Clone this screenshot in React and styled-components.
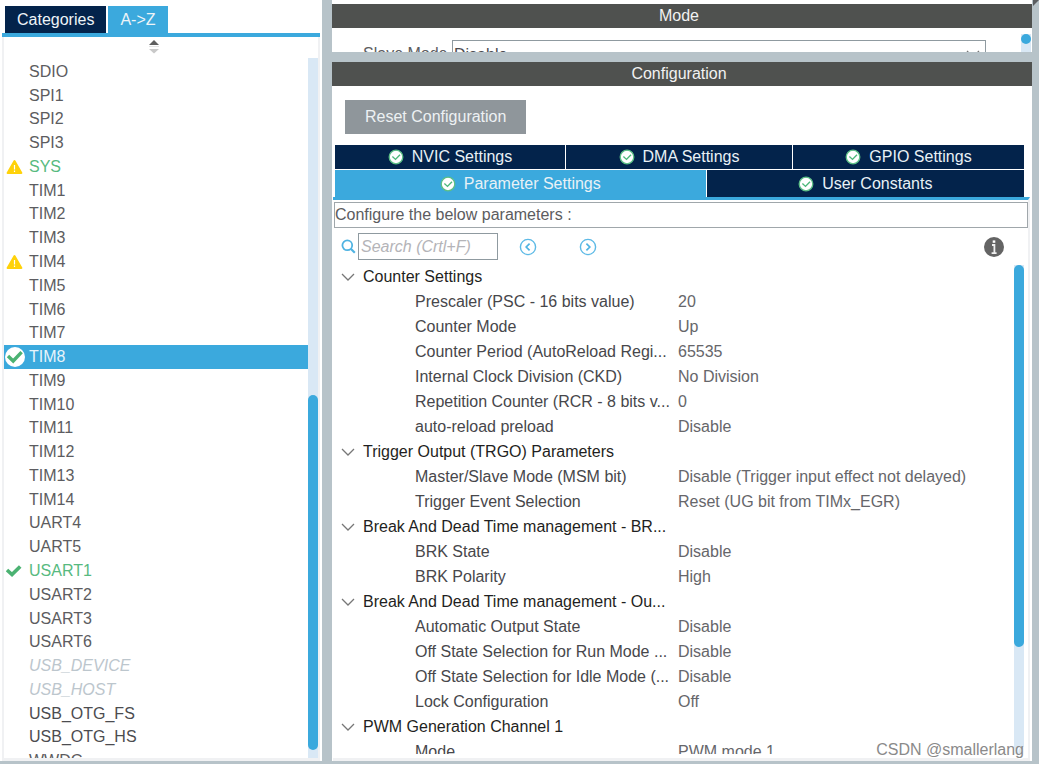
import React, { useState } from 'react'
import styled, { createGlobalStyle, css } from 'styled-components'

const peripherals = [
  { name: 'SDIO' },
  { name: 'SPI1' },
  { name: 'SPI2' },
  { name: 'SPI3' },
  { name: 'SYS', status: 'warning', used: true },
  { name: 'TIM1' },
  { name: 'TIM2' },
  { name: 'TIM3' },
  { name: 'TIM4', status: 'warning' },
  { name: 'TIM5' },
  { name: 'TIM6' },
  { name: 'TIM7' },
  { name: 'TIM8', status: 'selected' },
  { name: 'TIM9' },
  { name: 'TIM10' },
  { name: 'TIM11' },
  { name: 'TIM12' },
  { name: 'TIM13' },
  { name: 'TIM14' },
  { name: 'UART4' },
  { name: 'UART5' },
  { name: 'USART1', status: 'ok', used: true },
  { name: 'USART2' },
  { name: 'USART3' },
  { name: 'USART6' },
  { name: 'USB_DEVICE', disabled: true },
  { name: 'USB_HOST', disabled: true },
  { name: 'USB_OTG_FS', dark: true },
  { name: 'USB_OTG_HS', dark: true },
  { name: 'WWDG' },
]

const groups = [
  {
    title: 'Counter Settings',
    params: [
      ['Prescaler (PSC - 16 bits value)', '20'],
      ['Counter Mode', 'Up'],
      ['Counter Period (AutoReload Regi...', '65535'],
      ['Internal Clock Division (CKD)', 'No Division'],
      ['Repetition Counter (RCR - 8 bits v...', '0'],
      ['auto-reload preload', 'Disable'],
    ],
  },
  {
    title: 'Trigger Output (TRGO) Parameters',
    params: [
      ['Master/Slave Mode (MSM bit)', 'Disable (Trigger input effect not delayed)'],
      ['Trigger Event Selection', 'Reset (UG bit from TIMx_EGR)'],
    ],
  },
  {
    title: 'Break And Dead Time management - BR...',
    params: [
      ['BRK State', 'Disable'],
      ['BRK Polarity', 'High'],
    ],
  },
  {
    title: 'Break And Dead Time management - Ou...',
    params: [
      ['Automatic Output State', 'Disable'],
      ['Off State Selection for Run Mode ...', 'Disable'],
      ['Off State Selection for Idle Mode (...', 'Disable'],
      ['Lock Configuration', 'Off'],
    ],
  },
  {
    title: 'PWM Generation Channel 1',
    params: [['Mode', 'PWM mode 1']],
  },
]

const WarningIcon = () => (
  <svg width="18" height="16" viewBox="0 0 18 16">
    <path d="M8.5 2 L15.4 14 H1.6 Z" fill="#ffd20a" stroke="#ffd20a" strokeWidth="2" strokeLinejoin="round" />
    <path d="M8.5 6v4.4M8.5 11.6v1.4" stroke="#fff" strokeWidth="1.2" />
  </svg>
)

const OkIcon = () => (
  <svg width="18" height="16" viewBox="0 0 18 16">
    <path d="M1 7 L6 11.6 L14.2 3.4" fill="none" stroke="#4bb272" strokeWidth="3.6" />
  </svg>
)

const SelectedIcon = () => (
  <svg width="20" height="20" viewBox="0 0 20 20">
    <circle cx="10" cy="10" r="10" fill="#fff" />
    <path d="M3 9 L8.2 14 L16.6 5.2" fill="none" stroke="#4bb272" strokeWidth="3.4" />
  </svg>
)

const TabCheck = () => (
  <svg width="16" height="16" viewBox="0 0 16 16">
    <circle cx="8" cy="8" r="6.8" fill="#fff" stroke="#5cbf86" strokeWidth="1.3" />
    <path d="M4.4 7.6 L7.5 10.4 L12 5.8" fill="none" stroke="#4cb87a" strokeWidth="1.4" />
  </svg>
)

const Chevron = () => (
  <svg width="14" height="8" viewBox="0 0 14 8">
    <path d="M1 1 L7 7 L13 1" fill="none" stroke="#777" strokeWidth="1.3" />
  </svg>
)

const SortIcon = () => (
  <svg width="12" height="14" viewBox="0 0 12 14">
    <path d="M6 0 L11 5 H1 Z" fill="#5f5f5f" />
    <path d="M1 9 H11 L6 13.5 Z" fill="#c9c9c9" />
    <path d="M1 6.5 H11" stroke="#e4e4e4" />
  </svg>
)

const SearchIcon = () => (
  <svg width="15" height="15" viewBox="0 0 15 15">
    <circle cx="6.3" cy="6.3" r="4.9" fill="none" stroke="#4fb3e2" strokeWidth="1.8" />
    <path d="M9.8 9.8 L13.8 13.8" stroke="#4fb3e2" strokeWidth="2.2" />
  </svg>
)

const CircleArrow = ({ d }) => (
  <svg width="18" height="18" viewBox="0 0 18 18">
    <circle cx="9" cy="9" r="7.6" fill="none" stroke="#5dbae6" strokeWidth="1.4" />
    <path d={d} fill="none" stroke="#4fb3e2" strokeWidth="1.7" />
  </svg>
)

const InfoIcon = () => (
  <svg width="20" height="20" viewBox="0 0 20 20">
    <circle cx="10" cy="10" r="10" fill="#646464" />
    <path d="M10 3.4v2.4" stroke="#fff" strokeWidth="2.6" />
    <path d="M8 8h2.4v8M7.6 16.2h5" fill="none" stroke="#f0f0f0" strokeWidth="1.8" />
  </svg>
)

function Sidebar() {
  const [selected, setSelected] = useState('TIM8')

  return (
    <SidePanel>
      <SideTabs>
        <SideTab type="button">Categories</SideTab>
        <SideTab type="button" $active>A-&gt;Z</SideTab>
      </SideTabs>
      <SideBody>
        <SortButton type="button" aria-label="Sort"><SortIcon /></SortButton>
        <ListArea>
          <List>
            {peripherals.map((item) => (
              <Item key={item.name} $active={item.name === selected}>
                <Status>
                  {item.status === 'warning' && <WarningIcon />}
                  {item.status === 'ok' && <OkIcon />}
                  {item.status === 'selected' && <SelectedIcon />}
                </Status>
                <ItemButton
                  type="button"
                  disabled={item.disabled}
                  $used={item.used}
                  $dark={item.dark}
                  $active={item.name === selected}
                  onClick={() => setSelected(item.name)}
                >
                  {item.name}
                </ItemButton>
              </Item>
            ))}
          </List>
          <Track $before={337} $thumb={355} $after={8} />
        </ListArea>
      </SideBody>
    </SidePanel>
  )
}

function ModePanel() {
  return (
    <ModeBox>
      <Title>Mode</Title>
      <ModeBody>
        <ModeLabel htmlFor="slave-mode">Slave Mode</ModeLabel>
        <SelectWrap>
          <ModeSelect id="slave-mode" defaultValue="Disable">
            <option>Disable</option>
          </ModeSelect>
          <Chevron />
        </SelectWrap>
        <Track $before={0} $thumb={10} $after={8} />
      </ModeBody>
    </ModeBox>
  )
}

function ConfigPanel() {
  return (
    <ConfigBox>
      <Title>Configuration</Title>
      <ResetButton type="button">Reset Configuration</ResetButton>
      <TabRow>
        <Tab type="button" $grow={230}><TabCheck />NVIC Settings</Tab>
        <Tab type="button" $grow={226}><TabCheck />DMA Settings</Tab>
        <Tab type="button" $grow={231}><TabCheck />GPIO Settings</Tab>
      </TabRow>
      <TabRow $tall>
        <Tab type="button" $grow={370} $active><TabCheck />Parameter Settings</Tab>
        <Tab type="button" $grow={317}><TabCheck />User Constants</Tab>
      </TabRow>
      <TabBody>
        <Hint>Configure the below parameters :</Hint>
        <Tools>
          <SearchLabel htmlFor="search" aria-label="Search"><SearchIcon /></SearchLabel>
          <SearchInput id="search" type="text" placeholder="Search (Crtl+F)" />
          <ToolButton type="button" aria-label="Previous"><CircleArrow d="M10.6 5.6 L7.2 9 L10.6 12.4" /></ToolButton>
          <ToolButton type="button" aria-label="Next"><CircleArrow d="M7.4 5.6 L10.8 9 L7.4 12.4" /></ToolButton>
          <InfoButton type="button" aria-label="Info"><InfoIcon /></InfoButton>
        </Tools>
        <TreeArea>
          <TreeScroll>
            <Tree>
              <colgroup>
                <NameCol />
                <col />
              </colgroup>
              {groups.map((group) => (
                <tbody key={group.title}>
                  <tr>
                    <GroupCell colSpan="2">
                      <GroupButton type="button"><Chevron />{group.title}</GroupButton>
                    </GroupCell>
                  </tr>
                  {group.params.map(([name, value]) => (
                    <tr key={name}>
                      <NameCell>{name}</NameCell>
                      <ValueCell>{value}</ValueCell>
                    </tr>
                  ))}
                </tbody>
              ))}
            </Tree>
          </TreeScroll>
          <Track $before={0} $thumb={382} $after={107} />
        </TreeArea>
      </TabBody>
    </ConfigBox>
  )
}

export default function App() {
  return (
    <>
      <GlobalStyle />
      <Page>
        <Sidebar />
        <Main>
          <ModePanel />
          <ConfigPanel />
        </Main>
        <Corner width="6" height="6" viewBox="0 0 6 6">
          <path d="M0 0 H6 L0 6 Z" fill="#5a5d60" />
        </Corner>
        <Watermark>CSDN @smallerlang</Watermark>
      </Page>
    </>
  )
}

const GlobalStyle = createGlobalStyle`
  * {
    box-sizing: border-box;
  }

  body {
    margin: 0;
    background: #fff;
  }

  body, button, input, select {
    font-family: "Liberation Sans", Arial, sans-serif;
    font-size: 16px;
  }

  button {
    border: none;
    padding: 0;
    background: none;
    color: inherit;
    cursor: pointer;
  }

  svg {
    display: block;
    flex: none;
  }
`

const Page = styled.div`
  position: relative;
  display: grid;
  grid-template-columns: 322px 1fr;
  grid-template-rows: minmax(0, 1fr);
  gap: 10px;
  height: calc(100vh - 5px);
  padding: 0 7px 3px 0;
  background: #b7c3c9;
`

const Track = styled.div`
  flex: none;
  display: grid;
  grid-template-rows: ${(p) => `${p.$before}fr ${p.$thumb}fr ${p.$after}fr`};
  width: 10px;
  background: #d9e8f5;

  &::before {
    content: '';
    grid-row: 2;
    border-radius: 5px;
    background: #3ba9dd;
  }
`

/* sidebar */

const SidePanel = styled.aside`
  display: flex;
  flex-direction: column;
  min-height: 0;
  padding: 6px 2px 0;
  background: #fff;
`

const SideTabs = styled.div`
  display: flex;
  gap: 2px;
  padding: 0 3px;
  border-bottom: 4px solid #3ba9dd;
`

const SideTab = styled.button`
  height: 27px;
  padding: 0 12px;
  color: #eef4f8;
  background: ${(p) => (p.$active ? '#3ba9dd' : '#03234b')};
`

const SideBody = styled.div`
  flex: 1;
  display: flex;
  flex-direction: column;
  min-height: 0;
  border: solid #f0f1f3;
  border-width: 0 2px 3px;
`

const SortButton = styled.button`
  display: flex;
  justify-content: center;
  height: 21px;
  padding: 3px 14px 0 0;
`

const ListArea = styled.div`
  flex: 1;
  display: flex;
  min-height: 0;
  overflow: hidden;
`

const List = styled.ul`
  flex: 1;
  display: grid;
  grid-auto-rows: 1fr;
  margin: 2px 0 -15px;
  padding: 0;
  list-style: none;
`

const Item = styled.li`
  display: flex;
  align-items: center;
  min-height: 0;
  background: ${(p) => (p.$active ? '#3ba9dd' : 'none')};
`

const Status = styled.span`
  display: flex;
  flex: none;
  justify-content: center;
  width: 22px;
`

const ItemButton = styled.button`
  flex: 1;
  padding-left: 3px;
  line-height: 20px;
  text-align: left;
  color: #5c5c60;

  ${(p) => p.$dark && css`color: #4c4c50;`}
  ${(p) => p.$used && css`color: #57ba80;`}
  ${(p) => p.$active && css`color: #e6f4fb;`}

  &:disabled {
    color: #bcc6cd;
    font-style: italic;
  }
`

/* right side */

const Main = styled.main`
  display: flex;
  flex-direction: column;
  gap: 10px;
  min-width: 0;
  min-height: 0;
`

const Title = styled.h2`
  flex: none;
  margin: 0;
  padding-right: 6px;
  height: 24px;
  line-height: 24px;
  font-size: 16px;
  font-weight: normal;
  text-align: center;
  color: #f2f2f2;
  background: #4f514f;
`

const ModeBox = styled.section`
  display: flex;
  flex-direction: column;
  flex: none;
  height: 52px;
  padding-top: 4px;
  overflow: hidden;
  background: #fff;
`

const ModeBody = styled.div`
  flex: 1;
  display: flex;
  min-height: 0;
  padding: 6px 1px 0 31px;
`

const ModeLabel = styled.label`
  margin-top: 6px;
  line-height: 28px;
  width: 89px;
  color: #5c5c60;
`

const SelectWrap = styled.div`
  position: relative;
  flex: 1;
  margin: 6px 35px 0 0;

  svg {
    position: absolute;
    top: 10px;
    right: 6px;
  }
`

const ModeSelect = styled.select`
  appearance: none;
  width: 100%;
  height: 28px;
  padding: 0 1px;
  border: 1px solid #8f9aa0;
  border-radius: 0;
  color: #4c4c50;
  background: #fff;
`

const ConfigBox = styled.section`
  flex: 1;
  display: flex;
  flex-direction: column;
  min-height: 0;
  background: #fff;
`

const ResetButton = styled.button`
  align-self: flex-start;
  flex: none;
  height: 34px;
  margin: 14px 0 11px 13px;
  padding: 0 20px;
  color: #edf1f3;
  background: #8f969b;
`

const TabRow = styled.div`
  display: flex;
  flex: none;
  gap: 1px;
  height: ${(p) => (p.$tall ? '27px' : '24px')};
  margin: 0 8px 1px 3px;

  ${(p) => p.$tall && css`margin-bottom: 0;`}
`

const Tab = styled.button`
  display: flex;
  flex: ${(p) => p.$grow} 1 0;
  align-items: center;
  justify-content: center;
  gap: 8px;
  color: #e9f1f6;
  background: ${(p) => (p.$active ? '#3ba9dd' : '#03234b')};
`

const TabBody = styled.div`
  flex: 1;
  display: flex;
  flex-direction: column;
  min-height: 0;
  margin: 0 2px 0 1px;
  padding-top: 2px;
  border-top: 3px solid #3ba9dd;
  border-right: 2px solid #f0f1f3;
  border-bottom: 3px solid #f0f1f3;
`

const Hint = styled.div`
  flex: none;
  height: 26px;
  margin-left: 1px;
  line-height: 24px;
  border: 1px solid #a0a7ab;
  color: #5c5c60;
`

const Tools = styled.div`
  display: flex;
  flex: none;
  align-items: center;
  height: 37px;
  padding: 0 24px 0 8px;
`

const SearchLabel = styled.label`
  margin-right: 2px;
`

const SearchInput = styled.input`
  width: 140px;
  height: 27px;
  padding: 0 2px;
  border: 1px solid #8f9aa0;
  color: #5c5c60;

  &::placeholder {
    color: #b4b4b8;
    font-style: italic;
  }
`

const ToolButton = styled.button`
  margin-left: 21px;

  & + & {
    margin-left: 42px;
  }
`

const InfoButton = styled.button`
  margin-left: auto;
`

const TreeArea = styled.div`
  flex: 1;
  display: flex;
  min-height: 0;
  margin: 0 4px 4px 3px;
`

const TreeScroll = styled.div`
  flex: 1;
  overflow: hidden;
`

const Tree = styled.table`
  width: 100%;
  table-layout: fixed;
  border-collapse: collapse;
  white-space: nowrap;

  td, th {
    height: 25px;
    padding: 0;
    line-height: 23px;
    font-weight: normal;
    text-align: left;
    vertical-align: top;
  }
`

const NameCol = styled.col`
  width: 342px;
`

const GroupCell = styled.th`
  color: #1f1f22;
`

const GroupButton = styled.button`
  display: flex;
  align-items: center;
  gap: 8px;
  height: 23px;
  padding-left: 5px;
`

const NameCell = styled.td`
  color: #47474b;

  ${Tree} & {
    padding-left: 79px;
  }
`

const ValueCell = styled.td`
  color: #66666a;
`

/* overlays */

const Corner = styled.svg`
  position: absolute;
  top: 0;
  right: 0;
`

const Watermark = styled.div`
  position: absolute;
  right: 15px;
  bottom: 4px;
  line-height: 20px;
  color: #8a8a8a;
  text-shadow: 1px 1px 0 #fff;
`
